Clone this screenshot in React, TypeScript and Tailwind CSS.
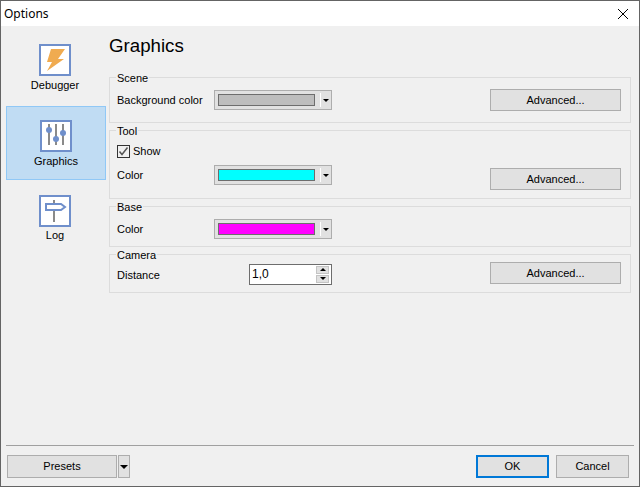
import React from "react";

const Combo = ({ color }: { color: string }) => (
  <div className="w-[118px] h-[20px] bg-[#e1e1e1] border border-[#adadad] flex items-center">
    <div className="ml-[3px] w-[97px] h-[12px] border border-[#6d6d6d]" style={{ background: color }} />
    <div className="ml-[5px] w-px h-[14px] bg-white" />
    <div className="flex-1 flex justify-center">
      <div className="w-0 h-0 border-x-[3px] border-x-transparent border-t-[3px] border-t-black" />
    </div>
  </div>
);

const Btn = ({ children, className = "" }: { children: React.ReactNode; className?: string }) => (
  <div className={`bg-[#e1e1e1] border border-[#adadad] flex items-center justify-center text-[11px] text-black ${className}`}>
    {children}
  </div>
);

const Group = ({ title, className, children }: { title: string; className: string; children: React.ReactNode }) => (
  <fieldset className={`border border-[#dcdcdc] pl-[7px] pr-[9px] block min-w-0 ${className}`}>
    <legend className="ml-[-1px] px-px pt-[2px] text-[11px] leading-[13px] text-black">{title}</legend>
    {children}
  </fieldset>
);

const Tile = ({ children }: { children: React.ReactNode }) => (
  <div className="w-[32px] h-[32px] border-2 border-[#6f8fcb] bg-white flex items-center justify-center">{children}</div>
);

export default function App() {
  return (
    <div className="w-[640px] h-[487px] bg-[#f0f0f0] border border-[#646464] flex flex-col overflow-hidden [font-family:'Liberation_Sans',Arial,sans-serif] text-black">
      <div className="h-[25px] bg-white flex items-center justify-between pl-[3px] pr-[10px] shrink-0">
        <span className="text-[12px] [font-family:'Noto_Sans',sans-serif]">Options</span>
        <svg width="12" height="12" viewBox="0 0 12 12" className="text-black">
          <path d="M1 1L11 11M11 1L1 11" stroke="currentColor" strokeWidth="1" fill="none" />
        </svg>
      </div>

      <div className="flex-1 flex min-h-0">
        <nav className="w-[108px] pl-[5px] pt-[18px] shrink-0 flex flex-col items-stretch">
          <div className="w-[98px] h-[62px] flex flex-col items-center">
            <Tile>
              <svg width="28" height="28" viewBox="0 0 28 28">
                <path d="M10 3H24L17 13H23L6 25L11 16H6Z" fill="#f0ab50" />
              </svg>
            </Tile>
            <span className="text-[11px] leading-[14px] mt-[2px]">Debugger</span>
          </div>
          <div className="w-[100px] h-[74px] bg-[#c0dcf3] border border-[#90c8f6] flex flex-col items-center pt-[13px]">
            <Tile>
              <svg width="28" height="28" viewBox="0 0 28 28">
                <path d="M7 2V23M14 2V23M21 2V23" stroke="#8a8a8a" strokeWidth="2" fill="none" />
                <circle cx="7" cy="8" r="3" fill="#6f8fcb" />
                <circle cx="14" cy="17" r="3" fill="#6f8fcb" />
                <circle cx="21" cy="11" r="3" fill="#6f8fcb" />
              </svg>
            </Tile>
            <span className="text-[11px] leading-[14px] mt-[2px]">Graphics</span>
          </div>
          <div className="w-[98px] mt-[15px] flex flex-col items-center">
            <Tile>
              <svg width="28" height="28" viewBox="0 0 28 28">
                <path d="M13 3V25" stroke="#8a8a8a" strokeWidth="2" fill="none" />
                <path d="M5 7H20L24 10L20 13H5Z" fill="#fff" stroke="#6f8fcb" strokeWidth="2" />
              </svg>
            </Tile>
            <span className="text-[11px] leading-[14px] mt-px">Log</span>
          </div>
        </nav>

        <main className="flex-1 min-w-0 pr-[8px]">
          <h1 className="text-[18.7px] leading-[22px] mt-[9px] h-[22px]">Graphics</h1>
          <div className="mt-[13px] flex flex-col">
            <Group title="Scene" className="h-[53px]">
              <div className="flex items-center h-[22px] mt-[4px]">
                <span className="text-[11px] w-[97px]">Background color</span>
                <Combo color="#bdbdbd" />
                <Btn className="ml-auto w-[131px] h-[22px]">Advanced...</Btn>
              </div>
            </Group>
            <Group title="Tool" className="h-[76px]">
              <div className="flex items-center h-[14px] mt-[6px] gap-[3px]">
                <div className="w-[13px] h-[13px] border border-[#333] flex items-center justify-center">
                  <svg width="11" height="11" viewBox="0 0 11 11">
                    <path d="M1.5 5.5L4 8.5L9.5 1.5" stroke="#555" strokeWidth="1.5" fill="none" />
                  </svg>
                </div>
                <span className="text-[11px]">Show</span>
              </div>
              <div className="flex items-start mt-[7px]">
                <span className="text-[11px] w-[97px] leading-[20px]">Color</span>
                <Combo color="#00ffff" />
                <Btn className="ml-auto w-[131px] h-[22px] mt-[3px]">Advanced...</Btn>
              </div>
            </Group>
            <Group title="Base" className="h-[48px]">
              <div className="flex items-center mt-[5px]">
                <span className="text-[11px] w-[97px]">Color</span>
                <Combo color="#ff00ff" />
              </div>
            </Group>
            <Group title="Camera" className="h-[46px]">
              <div className="flex items-center">
                <span className="text-[11px] w-[132px] mt-[2px]">Distance</span>
                <div className="w-[83px] h-[21px] bg-white border border-[#6d6d6d] flex items-center justify-between pl-[2px] pr-[2px]">
                  <span className="text-[12px] leading-none">1,0</span>
                  <div className="w-[13px] h-[17px] flex flex-col gap-px">
                    <div className="flex-1 bg-[#e1e1e1] border border-[#c4c4c4] flex items-center justify-center">
                      <div className="w-0 h-0 border-x-[3px] border-x-transparent border-b-[3px] border-b-black" />
                    </div>
                    <div className="flex-1 bg-[#e1e1e1] border border-[#c4c4c4] flex items-center justify-center">
                      <div className="w-0 h-0 border-x-[3px] border-x-transparent border-t-[3px] border-t-black" />
                    </div>
                  </div>
                </div>
                <Btn className="ml-auto w-[131px] h-[22px] mb-[2px]">Advanced...</Btn>
              </div>
            </Group>
          </div>
        </main>
      </div>

      <footer className="shrink-0 mx-[5px] border-t border-t-[#a0a0a0] pt-[9px] pb-[8px] flex items-center h-[41px]">
        <Btn className="w-[110px] h-[23px] ml-px">Presets</Btn>
        <Btn className="w-[12px] h-[23px] ml-px">
          <div className="w-0 h-0 border-x-[4px] border-x-transparent border-t-[4px] border-t-black" />
        </Btn>
        <Btn className="ml-auto w-[73px] h-[23px] !border-2 !border-[#0078d7]">OK</Btn>
        <Btn className="ml-[7px] mr-[5px] w-[73px] h-[23px]">Cancel</Btn>
      </footer>
    </div>
  );
}
